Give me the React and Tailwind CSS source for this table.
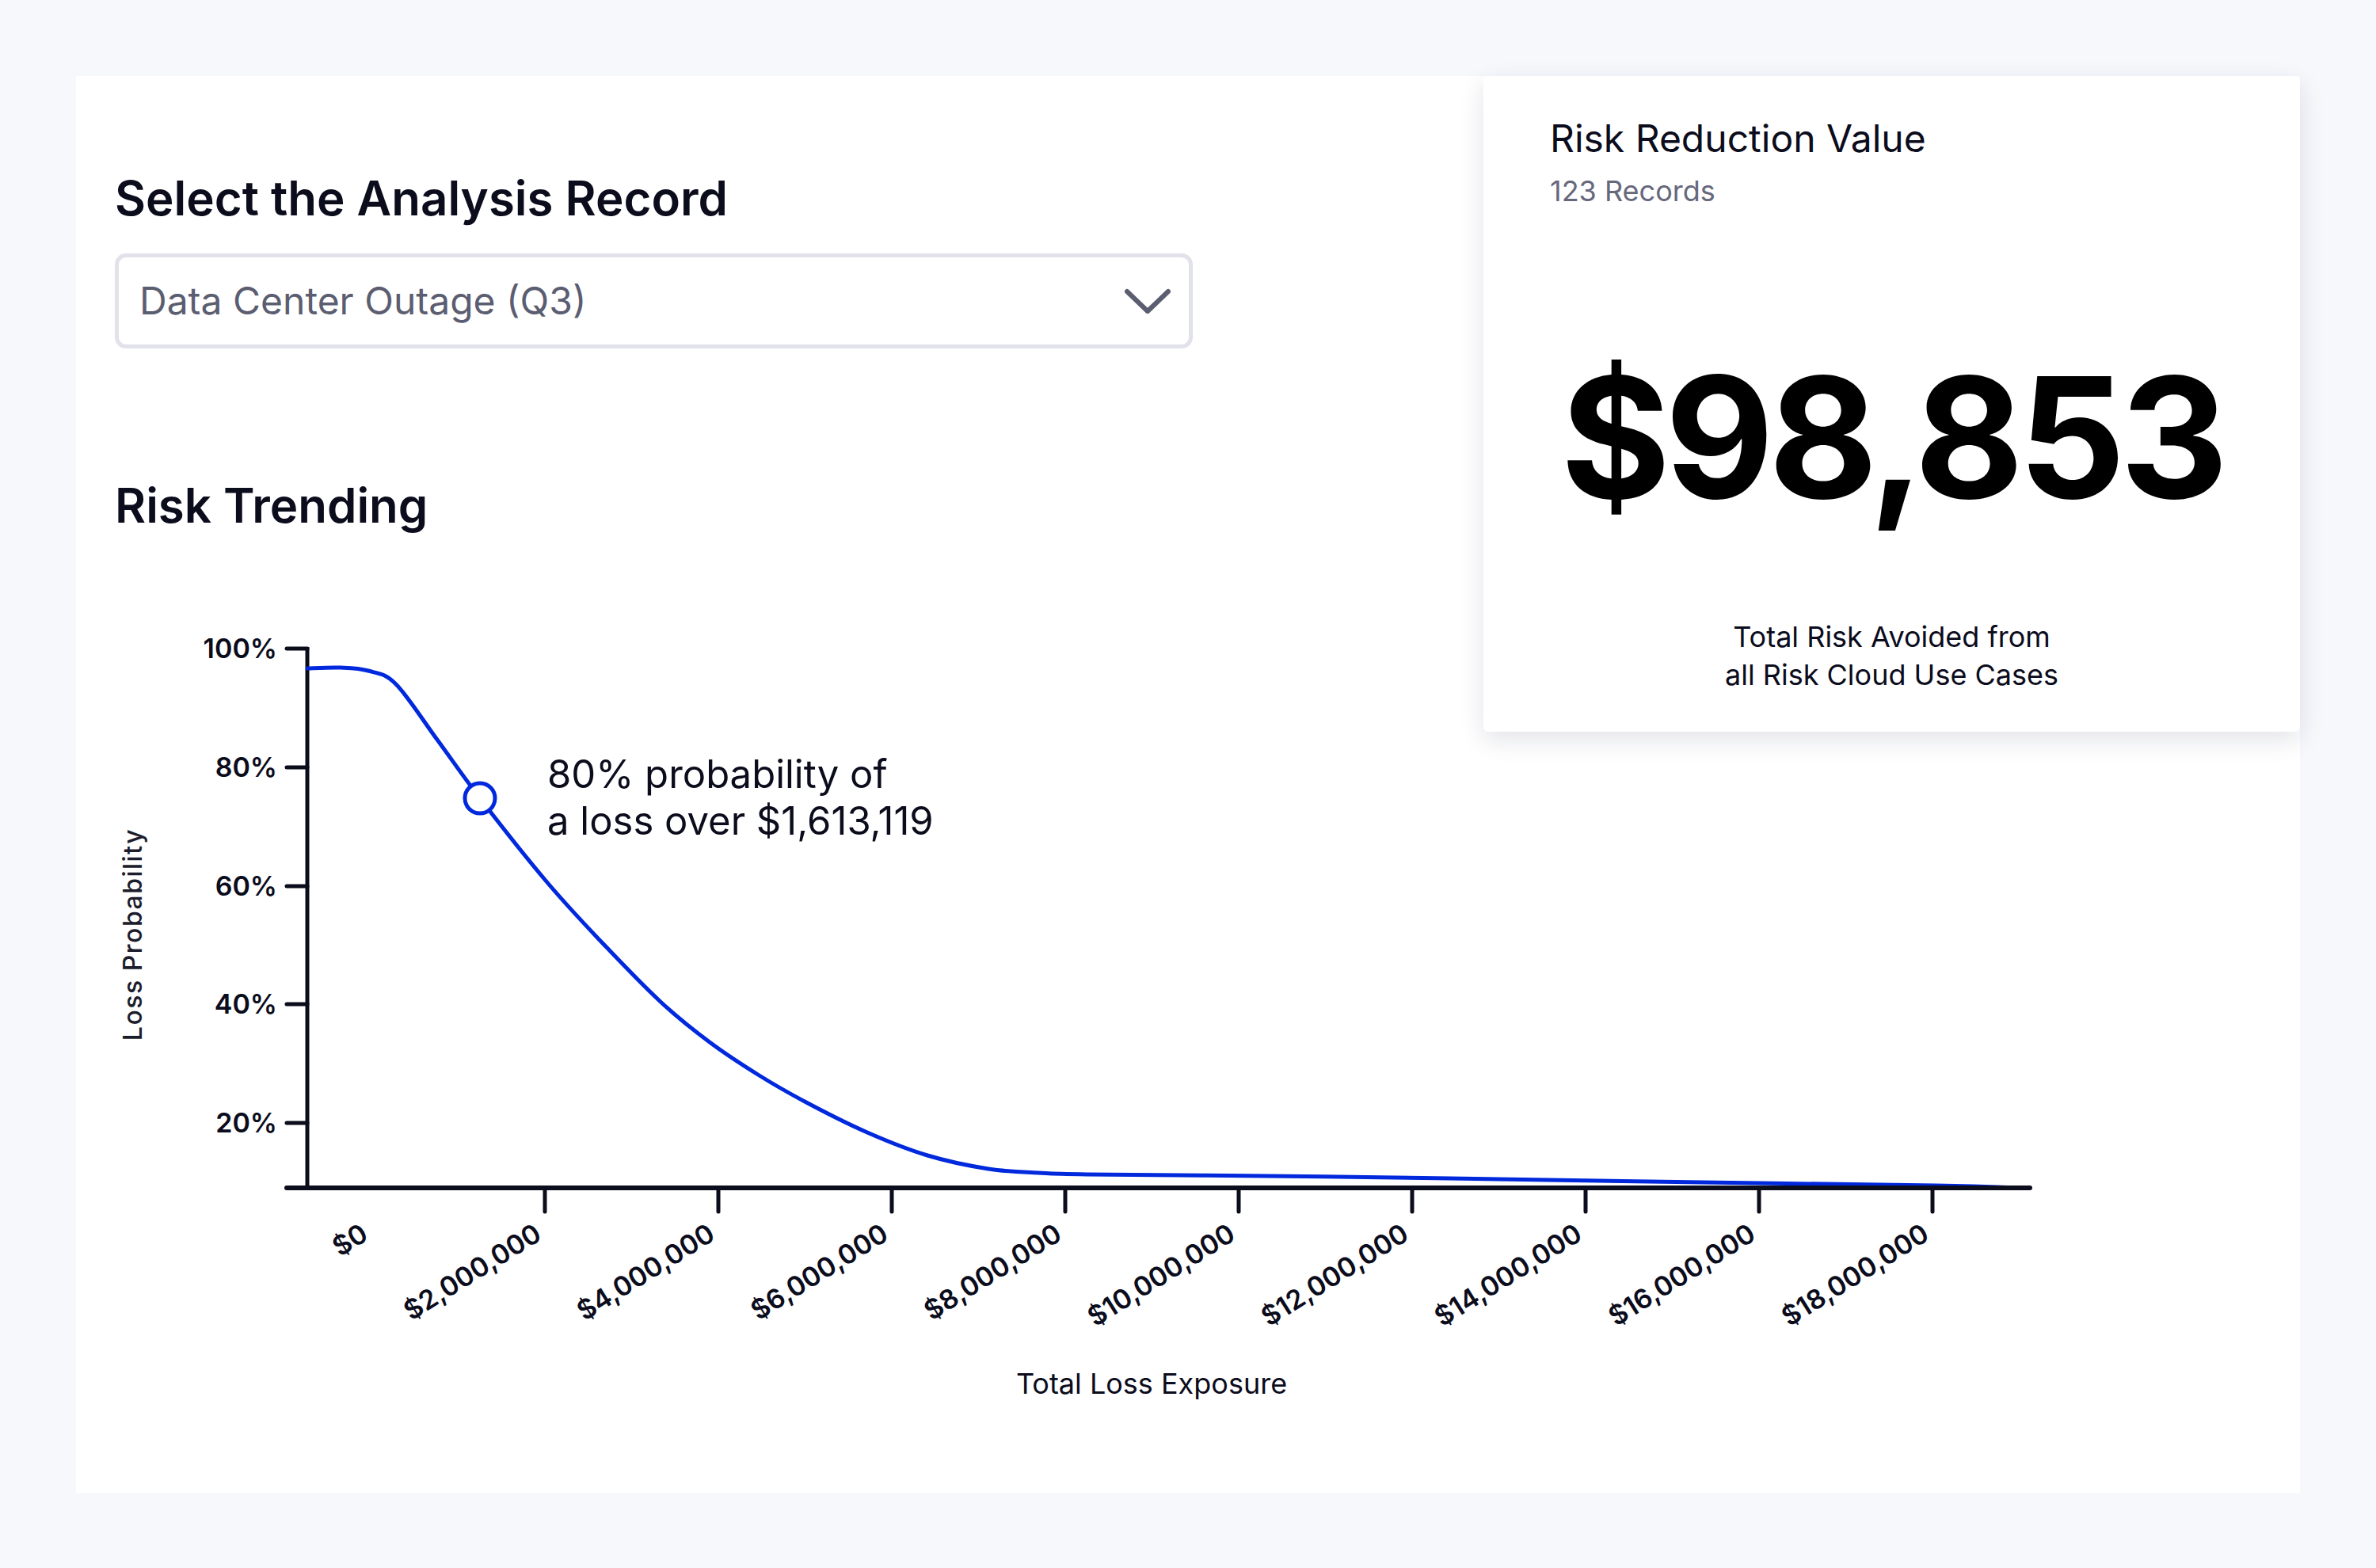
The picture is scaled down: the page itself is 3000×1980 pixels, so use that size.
import React from 'react';

// Loss exceedance curve, page coordinates (viewBox is offset to match)
const curve = [
  [388, 844], [430, 843], [465, 847], [500, 864], [552, 934], [606, 1008],
  [689, 1112], [758, 1188], [834, 1265], [896, 1316], [957, 1357], [1018, 1392],
  [1095, 1430], [1171, 1459], [1248, 1476], [1311, 1481], [1372, 1483],
  [1600, 1485], [1831, 1488], [2150, 1493], [2444, 1497], [2551, 1500],
];

const yTicks = [
  { label: '100%', y: 819 },
  { label: '80%', y: 969 },
  { label: '60%', y: 1119 },
  { label: '40%', y: 1268 },
  { label: '20%', y: 1418 },
];

const xLabels = [
  '$0', '$2,000,000', '$4,000,000', '$6,000,000', '$8,000,000',
  '$10,000,000', '$12,000,000', '$14,000,000', '$16,000,000', '$18,000,000',
];

function smoothPath(pts) {
  let d = `M${pts[0][0]},${pts[0][1]}`;
  for (let i = 0; i < pts.length - 1; i++) {
    const p0 = pts[i - 1] || pts[i];
    const p1 = pts[i];
    const p2 = pts[i + 1];
    const p3 = pts[i + 2] || p2;
    const c1x = p1[0] + (p2[0] - p0[0]) / 6;
    const c1y = p1[1] + (p2[1] - p0[1]) / 6;
    const c2x = p2[0] - (p3[0] - p1[0]) / 6;
    const c2y = p2[1] - (p3[1] - p1[1]) / 6;
    d += ` C${c1x.toFixed(1)},${c1y.toFixed(1)} ${c2x.toFixed(1)},${c2y.toFixed(1)} ${p2[0]},${p2[1]}`;
  }
  return d;
}

function RiskChart() {
  const tickX = (i) => 469 + 219 * i;

  return (
    <svg
      width="2480"
      height="1211"
      viewBox="96 674 2480 1211"
      className="block overflow-visible"
    >
      {/* axis titles */}
      <text
        x="179"
        y="1180"
        transform="rotate(-90 179 1180)"
        textAnchor="middle"
        className="fill-[#1c1d2c] text-[32px] font-medium tracking-[1.5px]"
      >
        Loss Probability
      </text>
      <text x="1454" y="1760" textAnchor="middle" className="fill-[#0b0c1c] text-[36px]">
        Total Loss Exposure
      </text>

      {/* y axis */}
      <line x1="388" y1="817" x2="388" y2="1500" stroke="#0b0c1c" strokeWidth="5" />
      {yTicks.map((t) => (
        <g key={t.label}>
          <line x1="362" y1={t.y} x2="388" y2={t.y} stroke="#0b0c1c" strokeWidth="5" strokeLinecap="round" />
          <text x="350" y={t.y + 12} textAnchor="end" className="fill-[#0b0c1c] text-[34px] font-semibold">
            {t.label}
          </text>
        </g>
      ))}

      {/* x axis */}
      {xLabels.map((label, i) => (
        <g key={label}>
          {i > 0 && (
            <line x1={tickX(i)} y1="1500" x2={tickX(i)} y2="1530" stroke="#0b0c1c" strokeWidth="5" strokeLinecap="round" />
          )}
          <text
            x={tickX(i) - 2}
            y="1564"
            textAnchor="end"
            transform={`rotate(-32 ${tickX(i) - 2} 1564)`}
            className="fill-[#0b0c1c] text-[34px] font-semibold"
          >
            {label}
          </text>
        </g>
      ))}

      {/* curve */}
      <path d={smoothPath(curve)} fill="none" stroke="#0028dc" strokeWidth="5" strokeLinecap="round" />
      <line x1="362" y1="1500" x2="2563" y2="1500" stroke="#0b0c1c" strokeWidth="6" strokeLinecap="round" />
      <circle cx="606" cy="1008" r="19" fill="#fff" stroke="#0028dc" strokeWidth="5" />

      <text x="691" y="995" className="fill-[#0b0c1c] text-[49px]">80% probability of</text>
      <text x="691" y="1054" className="fill-[#0b0c1c] text-[49px]">a loss over $1,613,119</text>
    </svg>
  );
}

function ValueCard() {
  return (
    <div className="w-[1031px] shrink-0 self-start rounded-[6px] bg-white px-[84px] pt-[50px] pb-[48px] shadow-[0_10px_32px_rgba(20,24,64,0.12)]">
      <h3 className="text-[48px] leading-[58px] text-[#0b0c1c]">Risk Reduction Value</h3>
      <p className="mt-[15px] text-[36px] leading-[44px] text-[#66687c]">123 Records</p>
      <p className="mt-[181px] whitespace-nowrap text-center text-[212px] leading-[216px] font-bold tracking-[-7px] text-black">
        $98,853
      </p>
      <p className="mt-[120px] text-center text-[36px] leading-[48px] text-[#0b0c1c]">
        Total Risk Avoided from
        <br />
        all Risk Cloud Use Cases
      </p>
    </div>
  );
}

export default function App() {
  return (
    <div className="min-h-screen bg-[#f7f8fc] p-[96px] font-['Inter',sans-serif] text-[#0b0c1c]">
      <div className="flex justify-between bg-white">
        <div className="w-[1775px] shrink-0">
          <div className="pl-[49px] pt-[118px]">
            <h2 className="text-[60px] leading-[72px] font-semibold">Select the Analysis Record</h2>
            <button className="mt-[34px] flex h-[120px] w-[1361px] items-center justify-between rounded-[14px] border-[5px] border-[#e1e2ea] bg-white pl-[26px] pr-[22px] text-left">
              <span className="text-[48px] text-[#5b5d70]">Data Center Outage (Q3)</span>
              <svg width="60" height="32" viewBox="0 0 60 32" fill="none">
                <path d="M4 4 L30 29 L56 4" stroke="#5b5d70" strokeWidth="6" strokeLinecap="round" strokeLinejoin="round" />
              </svg>
            </button>
            <h2 className="mt-[162px] text-[60px] leading-[72px] font-semibold">Risk Trending</h2>
          </div>
          <RiskChart />
        </div>
        <ValueCard />
      </div>
    </div>
  );
}
